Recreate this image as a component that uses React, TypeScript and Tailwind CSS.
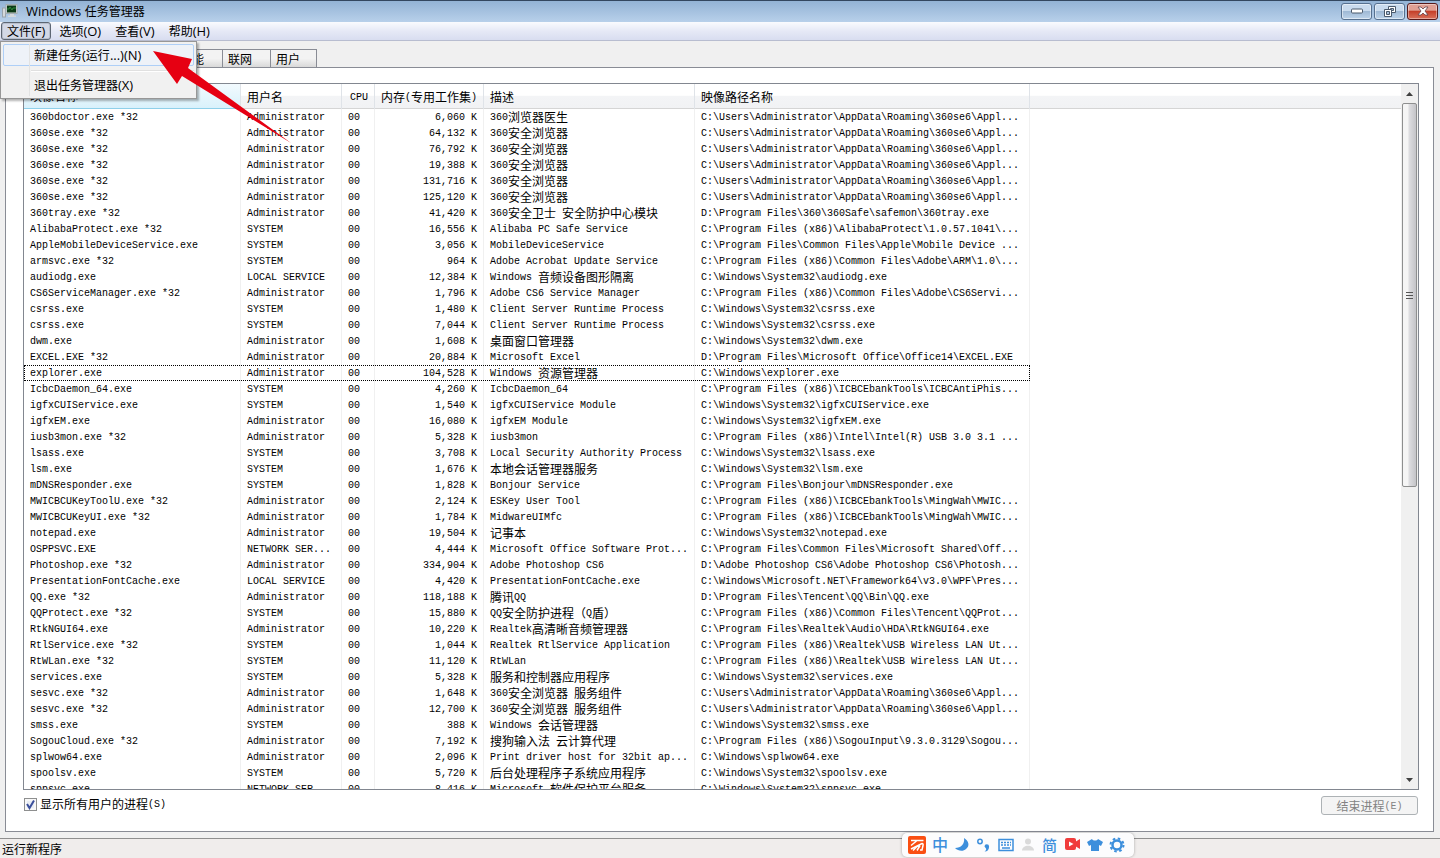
import React from "react";

type Row = [string, string, string, string, string];

const A = "Administrator";
const S = "SYSTEM";
const SE = "C:\\Users\\Administrator\\AppData\\Roaming\\360se6\\Appl...";
const SYS = "C:\\Windows\\System32\\";

const rows: Row[] = [
  ["360bdoctor.exe *32", A, "6,060", "360浏览器医生", SE],
  ["360se.exe *32", A, "64,132", "360安全浏览器", SE],
  ["360se.exe *32", A, "76,792", "360安全浏览器", SE],
  ["360se.exe *32", A, "19,388", "360安全浏览器", SE],
  ["360se.exe *32", A, "131,716", "360安全浏览器", SE],
  ["360se.exe *32", A, "125,120", "360安全浏览器", SE],
  ["360tray.exe *32", A, "41,420", "360安全卫士 安全防护中心模块", "D:\\Program Files\\360\\360Safe\\safemon\\360tray.exe"],
  ["AlibabaProtect.exe *32", S, "16,556", "Alibaba PC Safe Service", "C:\\Program Files (x86)\\AlibabaProtect\\1.0.57.1041\\..."],
  ["AppleMobileDeviceService.exe", S, "3,056", "MobileDeviceService", "C:\\Program Files\\Common Files\\Apple\\Mobile Device ..."],
  ["armsvc.exe *32", S, "964", "Adobe Acrobat Update Service", "C:\\Program Files (x86)\\Common Files\\Adobe\\ARM\\1.0\\..."],
  ["audiodg.exe", "LOCAL SERVICE", "12,384", "Windows 音频设备图形隔离", SYS + "audiodg.exe"],
  ["CS6ServiceManager.exe *32", A, "1,796", "Adobe CS6 Service Manager", "C:\\Program Files (x86)\\Common Files\\Adobe\\CS6Servi..."],
  ["csrss.exe", S, "1,480", "Client Server Runtime Process", SYS + "csrss.exe"],
  ["csrss.exe", S, "7,044", "Client Server Runtime Process", SYS + "csrss.exe"],
  ["dwm.exe", A, "1,608", "桌面窗口管理器", SYS + "dwm.exe"],
  ["EXCEL.EXE *32", A, "20,884", "Microsoft Excel", "D:\\Program Files\\Microsoft Office\\Office14\\EXCEL.EXE"],
  ["explorer.exe", A, "104,528", "Windows 资源管理器", "C:\\Windows\\explorer.exe"],
  ["IcbcDaemon_64.exe", S, "4,260", "IcbcDaemon_64", "C:\\Program Files (x86)\\ICBCEbankTools\\ICBCAntiPhis..."],
  ["igfxCUIService.exe", S, "1,540", "igfxCUIService Module", SYS + "igfxCUIService.exe"],
  ["igfxEM.exe", A, "16,080", "igfxEM Module", SYS + "igfxEM.exe"],
  ["iusb3mon.exe *32", A, "5,328", "iusb3mon", "C:\\Program Files (x86)\\Intel\\Intel(R) USB 3.0 3.1 ..."],
  ["lsass.exe", S, "3,708", "Local Security Authority Process", SYS + "lsass.exe"],
  ["lsm.exe", S, "1,676", "本地会话管理器服务", SYS + "lsm.exe"],
  ["mDNSResponder.exe", S, "1,828", "Bonjour Service", "C:\\Program Files\\Bonjour\\mDNSResponder.exe"],
  ["MWICBCUKeyToolU.exe *32", A, "2,124", "ESKey User Tool", "C:\\Program Files (x86)\\ICBCEbankTools\\MingWah\\MWIC..."],
  ["MWICBCUKeyUI.exe *32", A, "1,784", "MidwareUIMfc", "C:\\Program Files (x86)\\ICBCEbankTools\\MingWah\\MWIC..."],
  ["notepad.exe", A, "19,504", "记事本", SYS + "notepad.exe"],
  ["OSPPSVC.EXE", "NETWORK SER...", "4,444", "Microsoft Office Software Prot...", "C:\\Program Files\\Common Files\\Microsoft Shared\\Off..."],
  ["Photoshop.exe *32", A, "334,904", "Adobe Photoshop CS6", "D:\\Adobe Photoshop CS6\\Adobe Photoshop CS6\\Photosh..."],
  ["PresentationFontCache.exe", "LOCAL SERVICE", "4,420", "PresentationFontCache.exe", "C:\\Windows\\Microsoft.NET\\Framework64\\v3.0\\WPF\\Pres..."],
  ["QQ.exe *32", A, "118,188", "腾讯QQ", "D:\\Program Files\\Tencent\\QQ\\Bin\\QQ.exe"],
  ["QQProtect.exe *32", S, "15,880", "QQ安全防护进程（Q盾）", "C:\\Program Files (x86)\\Common Files\\Tencent\\QQProt..."],
  ["RtkNGUI64.exe", A, "10,220", "Realtek高清晰音频管理器", "C:\\Program Files\\Realtek\\Audio\\HDA\\RtkNGUI64.exe"],
  ["RtlService.exe *32", S, "1,044", "Realtek RtlService Application", "C:\\Program Files (x86)\\Realtek\\USB Wireless LAN Ut..."],
  ["RtWLan.exe *32", S, "11,120", "RtWLan", "C:\\Program Files (x86)\\Realtek\\USB Wireless LAN Ut..."],
  ["services.exe", S, "5,328", "服务和控制器应用程序", SYS + "services.exe"],
  ["sesvc.exe *32", A, "1,648", "360安全浏览器 服务组件", SE],
  ["sesvc.exe *32", A, "12,700", "360安全浏览器 服务组件", SE],
  ["smss.exe", S, "388", "Windows 会话管理器", SYS + "smss.exe"],
  ["SogouCloud.exe *32", A, "7,192", "搜狗输入法 云计算代理", "C:\\Program Files (x86)\\SogouInput\\9.3.0.3129\\Sogou..."],
  ["splwow64.exe", A, "2,096", "Print driver host for 32bit ap...", "C:\\Windows\\splwow64.exe"],
  ["spoolsv.exe", S, "5,720", "后台处理程序子系统应用程序", SYS + "spoolsv.exe"],
  ["sppsvc.exe", "NETWORK SER...", "8,416", "Microsoft 软件保护平台服务", SYS + "sppsvc.exe"],
];

/* Chinese runs are always 12px; Latin runs keep the size and face of the parent,
   and inside a data-mono container they are lowered to share the Chinese baseline. */
function T({ children, end = false }: { children: string; end?: boolean }) {
  const parts = children.match(/[\u3000-\uffef]+|[^\u3000-\uffef]+/g) ?? [];
  return (
    <span className={end ? "flex h-4 items-center justify-end whitespace-pre leading-4" : "flex h-4 items-center whitespace-pre leading-4"}>
      {parts.map((p, i) => (
        <span key={i} className={/[\u3000-\uffef]/.test(p) ? "font-['Noto_Sans_CJK_SC',sans-serif] text-[12px]" : "in-[[data-mono]]:pt-[2px]"}>{p}</span>
      ))}
    </span>
  );
}

const mono = "font-['Liberation_Mono','Noto_Sans_CJK_SC',monospace] text-[10px]";
const th = "h-[25px] p-0 px-[6px] font-normal border-r border-[#dfe3e8]";
const td = "h-4 p-0 px-[6px] border-r border-[#f0f0f0] overflow-hidden";

function ProcessTable() {
  return (
    <table className="w-[1006px] table-fixed border-separate border-spacing-0">
      <colgroup>
        <col className="w-[217px]" />
        <col className="w-[101px]" />
        <col className="w-[33px]" />
        <col className="w-[109px]" />
        <col className="w-[211px]" />
        <col className="w-[335px]" />
      </colgroup>
      <thead>
        <tr>
          <th className={th + " border-b border-b-[#8fd0ea] bg-linear-to-b from-[#f2fafe] to-[#d9f1fb]"}><T>映像名称</T></th>
          <th className={th}><T>用户名</T></th>
          <th className={th}><T end>CPU</T></th>
          <th className={th}><T end>内存(专用工作集)</T></th>
          <th className={th}><T>描述</T></th>
          <th className={th}><T>映像路径名称</T></th>
        </tr>
      </thead>
      <tbody>
        {rows.map(([name, user, mem, desc, path], i) => (
          <tr key={i} className={name === "explorer.exe" ? "outline-1 -outline-offset-1 outline-dotted outline-black" : ""}>
            <td className={td}><T>{name}</T></td>
            <td className={td}><T>{user}</T></td>
            <td className={td}><T>00</T></td>
            <td className={td}><T end>{mem + " K"}</T></td>
            <td className={td}><T>{desc}</T></td>
            <td className={td}><T>{path}</T></td>
          </tr>
        ))}
      </tbody>
    </table>
  );
}

function TitleBar() {
  const btn = "flex h-[17px] w-[31px] items-center justify-center rounded-[3px] border border-[#56708f] bg-linear-to-b from-[#c9dbee] from-45% via-[#9fb9d5] via-50% to-[#bdd3ea] inset-ring inset-ring-white/50";
  return (
    <header className="flex h-[22px] shrink-0 items-center border-t border-[#33475f] bg-linear-to-b from-[#93b3d5] to-[#b8d0ea] px-[2px] pb-px">
      <svg width="16" height="16" viewBox="0 0 16 16" aria-hidden="true">
        <rect x="0.500" y="5" width="3" height="9" fill="#d5d9dc" stroke="#9aa4ac" />
        <rect x="4" y="1.500" width="11" height="9" fill="#d8dcdc" stroke="#a3adb2" />
        <rect x="5" y="2.500" width="9" height="7" fill="#0b3a17" />
        <path d="M5 6h2l1-2 2 3 1-2h3" stroke="#2c8a3a" fill="none" />
        <path d="M8 11h4v1.500h2V14H6v-1.500h2z" fill="#d3d9dc" />
      </svg>
      <h1 className="ml-2 flex-1 text-[13px]"><T>Windows 任务管理器</T></h1>
      <div className="flex gap-[2px]">
        <button aria-label="最小化" className={btn}>
          <svg width="12" height="6" viewBox="0 0 12 6"><rect x="0.500" y="1" width="11" height="4" rx="1" fill="#fff" stroke="#4b5a6c" /></svg>
        </button>
        <button aria-label="还原" className={btn}>
          <svg width="12" height="11" viewBox="0 0 12 11" stroke="#4b5a6c" fill="#fff">
            <path d="M4.500.5h7v6h-7z" /><path d="M6.500 2.500h3v2h-3z" fill="#a8c0da" />
            <path d="M.5 3.500h7v7h-7z" /><path d="M2.500 5.500h3v3h-3z" fill="#a8c0da" />
          </svg>
        </button>
        <button aria-label="关闭" className="flex h-[17px] w-[31px] items-center justify-center rounded-[3px] border border-[#571a1a] bg-linear-to-b from-[#e0a094] from-40% via-[#c5402a] via-50% to-[#d9705a] inset-ring inset-ring-white/40">
          <svg width="12" height="10" viewBox="0 0 12 10"><path d="M1 1h3l2 2 2-2h3L8 5l3 4H8L6 7 4 9H1l3-4z" fill="#fff" stroke="#64424a" strokeWidth="0.800" /></svg>
        </button>
      </div>
    </header>
  );
}

function MenuBar() {
  const item = "flex h-[18px] items-center rounded-[3px] border px-[5px]";
  return (
    <nav className="relative flex h-[19px] shrink-0 items-center gap-[2px] border-b border-[#b8bdd0] bg-linear-to-b from-[#fafbfe] via-[#e6e9f6] to-[#d8ddf0] pl-px text-[13px]">
      <button className={item + " border-[#5d6673] bg-[#d3d8e6] inset-ring inset-ring-[#b8bfcd]"}><T>文件(F)</T></button>
      <button className={item + " border-transparent"}><T>选项(O)</T></button>
      <button className={item + " border-transparent"}><T>查看(V)</T></button>
      <button className={item + " border-transparent"}><T>帮助(H)</T></button>
      <div role="menu" className="absolute top-[19px] left-0 z-20 flex w-[197px] flex-col border border-[#979797] bg-[#f1f1f1] p-[2px] shadow-[2px_2px_2px_rgba(0,0,0,0.3)]">
        <div className="absolute inset-y-[2px] left-[28px] border-l border-[#e2e3e3]" />
        <button role="menuitem" className="flex h-[22px] items-center rounded-[2px] border border-[#aecff7] bg-[#edf2fa]/80 pl-[30px]"><T>新建任务(运行...)(N)</T></button>
        <div className="mt-[4px] mb-[2px] ml-[28px] h-[2px] border-t border-[#e0e0e0] bg-white" />
        <button role="menuitem" className="flex h-[22px] items-center border border-transparent pl-[30px]"><T>退出任务管理器(X)</T></button>
      </div>
    </nav>
  );
}

function ScrollBar() {
  return (
    <div className="flex w-[17px] shrink-0 flex-col items-center bg-[#f0f0f0]">
      <button aria-label="向上滚动" className="flex h-[19px] w-full items-center justify-center">
        <svg width="7" height="4" viewBox="0 0 7 4"><path d="M0 4 3.500 0 7 4z" fill="#404040" /></svg>
      </button>
      <div className="flex h-[384px] w-[15px] flex-col items-center justify-center gap-[2px] rounded-[2px] border border-[#8e8f8f] bg-linear-to-r from-[#f5f5f5] from-35% via-[#dcdcdf] via-50% to-[#c4c4c8]">
        <i className="h-px w-[7px] bg-[#555]" />
        <i className="h-px w-[7px] bg-[#555]" />
        <i className="h-px w-[7px] bg-[#555]" />
      </div>
      <button aria-label="向下滚动" className="mt-auto flex h-[19px] w-full items-center justify-center">
        <svg width="7" height="4" viewBox="0 0 7 4"><path d="M0 0 3.500 4 7 0z" fill="#404040" /></svg>
      </button>
    </div>
  );
}

function ImeBar() {
  const b = "#3d8fdc";
  return (
    <div className="absolute right-[306px] bottom-[1px] z-20 flex h-[24px] w-[232px] items-center gap-[6px] rounded-[5px] bg-[#fcfcfd] px-[6px] shadow-[0_0_3px_rgba(0,0,0,0.3)]">
      <svg width="18" height="18" viewBox="0 0 18 18" aria-hidden="true">
        <rect width="18" height="18" rx="2" fill="#fa4f12" />
        <path d="M3 4.500h12.500M8.500 5 3 9.500M3 13 14 7.500q1.500 0 1 2L14 14h-2M9 10.500l-4 4M12 9.500l-3 5" stroke="#fff" strokeWidth="1.500" fill="none" />
      </svg>
      <span className="w-4 text-[16px] leading-5 font-medium text-[#3d8fdc]">中</span>
      <svg width="16" height="16" viewBox="0 0 16 16"><path d="M10 1c5 3 6 8 2 11-3 3-8 2-11-1 6 0 10-4 9-10z" fill={b} /></svg>
      <svg width="16" height="16" viewBox="0 0 16 16"><circle cx="4" cy="4.500" r="2.200" fill="none" stroke={b} strokeWidth="1.500" /><path d="M8.500 9.500a2.300 2.300 0 1 1 4.600 0c0 3-1.500 5-4.600 5 1.500-1 2-2 1.500-3z" fill={b} /></svg>
      <svg width="16" height="16" viewBox="0 0 16 16" fill="none" stroke={b}><rect x="1" y="2.500" width="14" height="11" strokeWidth="1.500" /><path d="M3 5.500h10M3 8h10" strokeDasharray="2 1" strokeWidth="1.500" /><path d="M4 11h8" strokeWidth="1.500" /></svg>
      <svg width="16" height="16" viewBox="0 0 16 16" fill="#dadada"><circle cx="8" cy="4.500" r="3" /><path d="M2 13.500c0-6.500 12-6.500 12 0z" /></svg>
      <span className="w-4 text-[15px] leading-5 font-medium text-[#3d8fdc]">简</span>
      <svg width="17" height="16" viewBox="0 0 17 16"><rect x="1" y="1" width="11" height="12" rx="2" fill="#f03c3c" /><path d="m11 5 5-3v10l-5-3z" fill="#f03c3c" /><path d="m5 4.500 4.500 2.500L5 9.500z" fill="#fff" /></svg>
      <svg width="16" height="16" viewBox="0 0 16 16"><path d="M5 2c1 2 5 2 6 0l5 3-2 4-2-1v6H4V8L2 9 0 5z" fill={b} /></svg>
      <svg width="16" height="16" viewBox="0 0 16 16" fill="none" stroke={b}><circle cx="8" cy="8" r="4.500" strokeWidth="2.500" /><circle cx="8" cy="8" r="6.500" strokeWidth="2" strokeDasharray="2.550 2.550" /></svg>
    </div>
  );
}

export default function App() {
  const tab = "-ml-px h-[18px] border border-b-0 border-[#898c95] bg-linear-to-b from-[#f3f3f3] from-50% to-[#d9d9d9] pl-[5px]";
  return (
    <div className="relative flex h-screen flex-col overflow-hidden bg-[#f0f0f0] font-['Open_Sans','Noto_Sans_CJK_SC',sans-serif] text-black">
      <TitleBar />
      <MenuBar />
      <main className="flex min-h-0 flex-1 flex-col pt-[8px] pr-[6px] pb-[6px] pl-[5px]">
        <div role="tablist" className="flex pl-[2px]">
          <button role="tab" className={tab + " w-[73px]"}><T>应用程序</T></button>
          <button role="tab" className={tab + " w-[49px]"}><T>进程</T></button>
          <button role="tab" className={tab + " w-[49px]"}><T>服务</T></button>
          <button role="tab" className={tab + " w-[49px]"}><T>性能</T></button>
          <button role="tab" className={tab + " w-[49px]"}><T>联网</T></button>
          <button role="tab" className={tab + " w-[47px]"}><T>用户</T></button>
        </div>
        <section className="flex min-h-0 flex-1 flex-col border border-[#898c95] bg-white pt-[15px] pr-[14px] pl-[17px]">
          <div data-mono className={"flex min-h-0 flex-1 border border-[#828790] " + mono}>
            <div className="min-w-0 flex-1 overflow-hidden bg-[linear-gradient(to_bottom,#ffffff_45%,#f3f4f6_50%,#f1f2f4_96%,#d5d5d5_96%)] bg-[length:100%_25px] bg-no-repeat">
              <ProcessTable />
            </div>
            <ScrollBar />
          </div>
          <div data-mono className={"flex h-[41px] shrink-0 items-start justify-between px-px pt-[6px] " + mono}>
            <label className="flex items-center gap-[3px]">
              <span className="relative flex">
                <input type="checkbox" defaultChecked className="size-[13px] appearance-none border border-[#8e8f8f] bg-[#e9edf4] inset-ring-2 inset-ring-[#f8f8f8]" />
                <svg className="pointer-events-none absolute inset-0" width="13" height="13" viewBox="0 0 13 13"><path d="m3 6 2.500 4L10 2.500" stroke="#3b4f9b" strokeWidth="2" fill="none" /></svg>
              </span>
              <T>显示所有用户的进程(S)</T>
            </label>
            <button disabled className="flex h-[19px] w-[97px] items-center justify-center rounded-[3px] border border-[#adb2b5] bg-[#f4f4f4] text-[#838383]"><T>结束进程(E)</T></button>
          </div>
        </section>
      </main>
      <footer className="flex h-[20px] shrink-0 items-center border-t border-[#8f8f8f] bg-[#f0edec] pl-[2px]"><T>运行新程序</T></footer>
      <ImeBar />
      <svg className="pointer-events-none absolute top-[51px] left-[153px] z-30" width="139" height="93" viewBox="0 0 139 93" aria-hidden="true">
        <path d="M0 0 39 8l-4 9L138 92 29 25l-5 8z" fill="#e60012" />
      </svg>
    </div>
  );
}
